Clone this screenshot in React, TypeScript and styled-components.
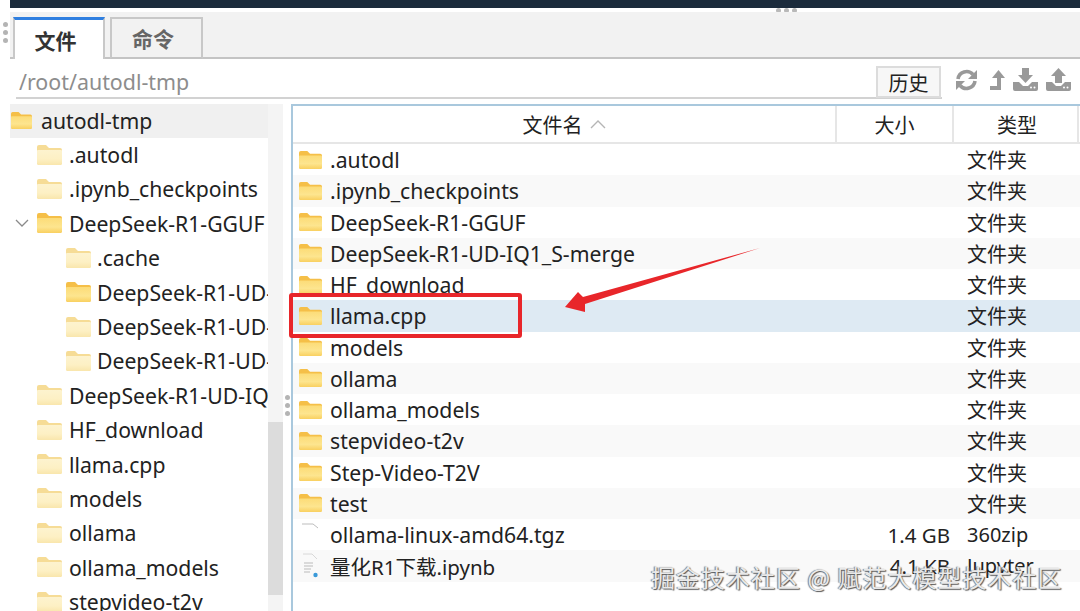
import React from "react";
import styled, { createGlobalStyle } from "styled-components";

const Global = createGlobalStyle`
  html, body { margin: 0; padding: 0; background: #fff; }
  #root { width: 1080px; height: 611px; overflow: hidden; }
  * { box-sizing: border-box; }
`;

const Page = styled.div`
  position: relative;
  width: 1080px;
  height: 611px;
  overflow: hidden;
  display: flex;
  flex-direction: column;
  font-family: "Noto Sans", "Noto Sans CJK SC", sans-serif;
  font-size: 21.2px;
  color: #222;
  background: #fff;
`;

const TopStrip = styled.div`
  height: 8px;
  margin-left: 10px;
  background: #1b2b3c;
  flex: none;
`;

const HandleRow = styled.div`
  height: 4px;
  flex: none;
  display: flex;
  justify-content: flex-end;
  align-items: center;
  gap: 3px;
  padding-right: 283px;
`;

const Dot = styled.span`
  width: 5px;
  height: 5px;
  border-radius: 50%;
  background: #b9b9b9;
`;

const TabBar = styled.div`
  position: relative;
  height: 47px;
  flex: none;
  display: flex;
  align-items: flex-end;
  gap: 5px;
  padding-left: 3px;
  margin-left: 10px;
  background: #f2f2f2;
  border-bottom: 2px solid #c4c4c4;
`;

const GripColumn = styled.div`
  position: absolute;
  left: -7px;
  top: 10px;
  display: flex;
  flex-direction: column;
  gap: 3px;
`;

const Tab = styled.div<{ $active?: boolean }>`
  width: ${(p) => (p.$active ? 92 : 93)}px;
  height: 42px;
  margin-bottom: -2px;
  padding-right: 7px;
  display: flex;
  align-items: center;
  justify-content: center;
  font-size: 21px;
  font-weight: 700;
  font-family: "Noto Sans CJK SC", sans-serif;
  color: ${(p) => (p.$active ? "#333" : "#666")};
  background: ${(p) => (p.$active ? "#fff" : "#f2f2f2")};
  border: 2px solid #c8c8c8;
  border-top: ${(p) => (p.$active ? "3px solid #2f7fe0" : "2px solid #c8c8c8")};
  border-bottom: ${(p) => (p.$active ? "none" : "2px solid #c4c4c4")};
`;

const PathRow = styled.div`
  height: 45px;
  flex: none;
  display: flex;
  align-items: flex-start;
  padding-left: 16px;
`;

const PathBox = styled.div`
  width: 926px;
  height: 40px;
  padding: 8px 0 0 3px;
  color: #8d8d8d;
  font-size: 21.4px;
  line-height: 30px;
  border-bottom: 2px solid #d2d2d2;
  position: relative;
`;

const HistoryButton = styled.button`
  position: absolute;
  right: 1px;
  top: 7px;
  width: 65px;
  height: 32px;
  padding: 0;
  font-family: "Noto Sans CJK SC", sans-serif;
  font-size: 20px;
  color: #222;
  background: #f7f7f7;
  border: 2px solid #dcdcdc;
`;

const Tools = styled.div`
  display: flex;
  align-items: center;
  gap: 8px;
  margin: 9px 0 0 13px;
  color: #999;
`;

const RefreshSvg = styled.svg`
  margin-right: 4px;
`;

const Panes = styled.div`
  flex: 1;
  min-height: 0;
  display: flex;
  padding-left: 10px;
`;

const Tree = styled.div`
  width: 258px;
  flex: none;
  display: flex;
  flex-direction: column;
  overflow: hidden;
`;

const TreeRow = styled.div<{ $depth: number; $selected?: boolean }>`
  height: 34.4px;
  flex: none;
  display: flex;
  align-items: center;
  gap: ${(p) => [9, 7, 6][p.$depth]}px;
  white-space: nowrap;
  padding-left: ${(p) => [1, 27, 56][p.$depth]}px;
  padding-bottom: 2px;
  background: ${(p) => (p.$selected ? "#f0f0f0" : "transparent")};
  position: relative;
`;

const Chevron = styled.svg`
  position: absolute;
  left: 5px;
  top: 12px;
  color: #8a8a8a;
`;

const ScrollTrack = styled.div`
  width: 15px;
  flex: none;
  background: #f4f4f4;
  padding-top: 318px;
`;

const ScrollThumb = styled.div`
  height: 173px;
  background: #dcdcdc;
`;

const Divider = styled.div`
  width: 9px;
  flex: none;
  display: flex;
  flex-direction: column;
  align-items: center;
  gap: 3px;
  padding-top: 291px;
`;

const SmallDot = styled.span`
  width: 5px;
  height: 5px;
  border-radius: 50%;
  background: #b4b4b4;
`;

const Table = styled.div`
  flex: 1;
  min-width: 0;
  margin-left: -1px;
  border-left: 2px solid #a9c8dd;
  border-top: 2px solid #a9c8dd;
  display: flex;
  flex-direction: column;
`;

const HeaderRow = styled.div`
  height: 38px;
  flex: none;
  display: grid;
  grid-template-columns: 544px 117px 125px;
  border-bottom: 2px solid #e6e6e6;
`;

const HeaderCell = styled.div<{ $inset?: number }>`
  display: flex;
  align-items: center;
  justify-content: center;
  gap: 7px;
  padding-left: ${(p) => p.$inset ?? 0}px;
  font-family: "Noto Sans CJK SC", sans-serif;
  font-size: 20px;
  border-right: 2px solid #e6e6e6;
`;

const Row = styled.div<{ $tone?: "stripe" | "selected" }>`
  height: 31.25px;
  flex: none;
  display: grid;
  grid-template-columns: 544px 117px 125px;
  align-items: center;
  background: ${(p) =>
    p.$tone === "selected" ? "#deeaf3" : p.$tone === "stripe" ? "#f9f9f9" : "#fff"};
`;

const NameCell = styled.div`
  display: flex;
  align-items: center;
  gap: 8px;
  padding-left: 6px;
  white-space: nowrap;
`;

const MixedName = styled.span`
  font-size: 20.5px;
`;

const SizeCell = styled.div`
  text-align: right;
  padding-right: 4px;
  font-size: 20.5px;
`;

const TypeCell = styled.div`
  padding-left: 13px;
  white-space: nowrap;
  font-size: 20px;
`;

const Highlight = styled.div`
  position: absolute;
  left: 289px;
  top: 293px;
  width: 233px;
  height: 45px;
  border: 4px solid #e8262a;
  border-radius: 3px;
`;

const ArrowLayer = styled.svg`
  position: absolute;
  left: 560px;
  top: 245px;
`;

const Watermark = styled.div`
  position: absolute;
  left: 651px;
  top: 561px;
  font-family: "Noto Sans CJK SC", sans-serif;
  font-size: 24px;
  line-height: 32px;
  letter-spacing: 1px;
  white-space: nowrap;
  color: #e9e9e9;
  text-shadow: 1px 1px 1px #555, -1px 0 1px #777;
`;

function FolderIcon({ pale, width = 25, height = 20 }: { pale?: boolean; width?: number; height?: number }) {
  const id = pale ? "fp" : "fs";
  return (
    <svg width={width} height={height} viewBox="0 0 25 20" preserveAspectRatio="none" style={{ flex: "none" }}>
      <defs>
        <linearGradient id={id} x1="0" y1="0" x2="0" y2="1">
          <stop offset="0" stopColor={pale ? "#fdf3cf" : "#fcdc78"} />
          <stop offset="0.6" stopColor={pale ? "#fdf0c4" : "#fde58f"} />
          <stop offset="1" stopColor={pale ? "#f9e6ac" : "#f9d060"} />
        </linearGradient>
      </defs>
      <path d="M0 2 Q0 0 2 0H9L12 3H23Q25 3 25 5V18Q25 20 23 20H2Q0 20 0 18Z" fill={pale ? "#f6dc96" : "#f5bf48"} />
      <path d="M0 6 Q0 5 1 5H24Q25 5 25 6V18Q25 20 23 20H2Q0 20 0 18Z" fill={`url(#${id})`} />
    </svg>
  );
}

function FileIcon({ notebook }: { notebook?: boolean }) {
  return (
    <svg width={23} height={26} viewBox="0 0 23 26" style={{ flex: "none" }}>
      {notebook ? (
        <>
          <path d="M4 1H13M13 1L18 6" stroke="#d8d8d8" fill="none" />
          <path d="M5 10H14M5 13H14M5 16H12M5 19H11" stroke="#cfcfcf" strokeWidth="1.3" />
          <circle cx="16.5" cy="22" r="2.2" fill="#3a9ad9" />
        </>
      ) : (
        <path d="M3 2H14M14 2L19 6" stroke="#bdbdbd" fill="none" />
      )}
    </svg>
  );
}

function RefreshIcon() {
  return (
    <RefreshSvg width={23} height={22} viewBox="0 0 23 22" fill="none" stroke="currentColor" strokeWidth="3.6">
      <path d="M3 10A8.6 8.6 0 0 1 18 5.5" />
      <path d="M20 12A8.6 8.6 0 0 1 5 16.5" />
      <path d="M22 1V10H13Z" fill="currentColor" stroke="none" />
      <path d="M1 21V12H10Z" fill="currentColor" stroke="none" />
    </RefreshSvg>
  );
}

function UpIcon() {
  return (
    <svg width={15} height={22} viewBox="0 0 15 22" fill="currentColor">
      <path d="M8.5 1L15 9H11V21H0V17H7V9H2Z" />
    </svg>
  );
}

function TransferIcon({ up }: { up?: boolean }) {
  return (
    <svg width={25} height={23} viewBox="0 0 25 23" fill="currentColor">
      {up ? <path d="M12.5 0L20 8H16V15H9V8H5Z" /> : <path d="M9 0H16V7H20L12.5 15L5 7H9Z" />}
      <path d="M0 14H6L10 18H15L19 14H25V21Q25 23 23 23H2Q0 23 0 21Z" />
      <circle cx="18" cy="19.5" r="1" fill="#fff" />
      <circle cx="21.5" cy="19.5" r="1" fill="#fff" />
    </svg>
  );
}

const treeItems: { name: string; depth: number; selected?: boolean; open?: boolean; strong?: boolean }[] = [
  { name: "autodl-tmp", depth: 0, selected: true, strong: true },
  { name: ".autodl", depth: 1 },
  { name: ".ipynb_checkpoints", depth: 1 },
  { name: "DeepSeek-R1-GGUF", depth: 1, open: true, strong: true },
  { name: ".cache", depth: 2 },
  { name: "DeepSeek-R1-UD-IQ1_S", depth: 2, strong: true },
  { name: "DeepSeek-R1-UD-IQ1_S", depth: 2 },
  { name: "DeepSeek-R1-UD-IQ1_S", depth: 2 },
  { name: "DeepSeek-R1-UD-IQ1_S-merge", depth: 1 },
  { name: "HF_download", depth: 1 },
  { name: "llama.cpp", depth: 1 },
  { name: "models", depth: 1 },
  { name: "ollama", depth: 1 },
  { name: "ollama_models", depth: 1 },
  { name: "stepvideo-t2v", depth: 1 },
];

const folders = [
  ".autodl",
  ".ipynb_checkpoints",
  "DeepSeek-R1-GGUF",
  "DeepSeek-R1-UD-IQ1_S-merge",
  "HF_download",
  "llama.cpp",
  "models",
  "ollama",
  "ollama_models",
  "stepvideo-t2v",
  "Step-Video-T2V",
  "test",
];

export default function App() {
  return (
    <Page>
      <Global />
      <TopStrip />
      <HandleRow>
        <Dot />
        <Dot />
        <Dot />
      </HandleRow>
      <TabBar>
        <GripColumn>
          <SmallDot />
          <SmallDot />
          <SmallDot />
        </GripColumn>
        <Tab $active>文件</Tab>
        <Tab>命令</Tab>
      </TabBar>
      <PathRow>
        <PathBox>
          /root/autodl-tmp
          <HistoryButton>历史</HistoryButton>
        </PathBox>
        <Tools>
          <RefreshIcon />
          <UpIcon />
          <TransferIcon />
          <TransferIcon up />
        </Tools>
      </PathRow>
      <Panes>
        <Tree>
          {treeItems.map((t, i) => (
            <TreeRow key={i} $depth={t.depth} $selected={t.selected}>
              {t.open && (
                <Chevron width={14} height={9} viewBox="0 0 14 9" fill="none" stroke="currentColor" strokeWidth="1.3">
                  <path d="M1 1L7 7L13 1" />
                </Chevron>
              )}
              {t.depth === 0 ? (
                <FolderIcon width={21} height={17} />
              ) : (
                <FolderIcon pale={!t.strong} />
              )}
              <span>{t.name}</span>
            </TreeRow>
          ))}
        </Tree>
        <ScrollTrack>
          <ScrollThumb />
        </ScrollTrack>
        <Divider>
          <SmallDot />
          <SmallDot />
          <SmallDot />
        </Divider>
        <Table>
          <HeaderRow>
            <HeaderCell>
              文件名
              <svg width={16} height={9} viewBox="0 0 16 9" fill="none" stroke="#b5b5b5" strokeWidth="1.4">
                <path d="M1 8L8 1L15 8" />
              </svg>
            </HeaderCell>
            <HeaderCell>大小</HeaderCell>
            <HeaderCell $inset={3}>类型</HeaderCell>
          </HeaderRow>
          {folders.map((f, i) => (
            <Row key={f} $tone={f === "llama.cpp" ? "selected" : i % 2 === 1 ? "stripe" : undefined}>
              <NameCell>
                <FolderIcon width={23} height={18} />
                <span>{f}</span>
              </NameCell>
              <SizeCell />
              <TypeCell>文件夹</TypeCell>
            </Row>
          ))}
          <Row>
            <NameCell>
              <FileIcon />
              <span>ollama-linux-amd64.tgz</span>
            </NameCell>
            <SizeCell>1.4 GB</SizeCell>
            <TypeCell>360zip</TypeCell>
          </Row>
          <Row $tone="stripe">
            <NameCell>
              <FileIcon notebook />
              <MixedName>量化R1下载.ipynb</MixedName>
            </NameCell>
            <SizeCell>4.1 KB</SizeCell>
            <TypeCell>Jupyter</TypeCell>
          </Row>
        </Table>
      </Panes>
      <Highlight />
      <ArrowLayer width={210} height={70} viewBox="0 0 210 70">
        <path d="M200 3L23 52L18 47L5 62L25 67L25 59Z" fill="#e8262a" />
      </ArrowLayer>
      <Watermark>掘金技术社区 @ 赋范大模型技术社区</Watermark>
    </Page>
  );
}
